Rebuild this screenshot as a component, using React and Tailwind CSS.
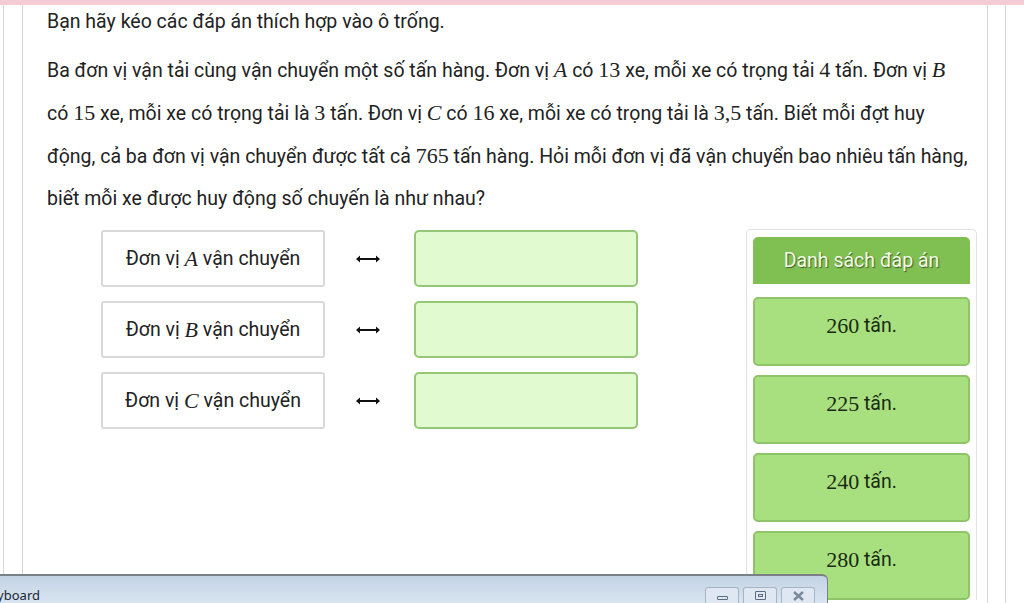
const M = ({ children, italic }) => (
  <span className={`font-['Liberation_Serif',serif] text-[22px] ${italic ? 'italic' : ''}`}>{children}</span>
);

const units = ['A', 'B', 'C'];
const answers = ['260', '225', '240', '280'];

export default function App() {
  return (
    <div className="relative w-[1024px] h-[603px] overflow-hidden bg-white font-['Roboto',sans-serif] text-[#222]">
      <div className="h-[5px] bg-[#f3cdd3]" />
      <div className="flex h-[598px]">
        <div className="w-[3px]" />
        <div className="w-[19px] border-l border-[#d6d6d6]" />
        <div className="w-[965px] border-l border-[#d6d6d6] pl-[24px]">
          <p className="pt-[4px] text-[19.5px] leading-[26px]">Bạn hãy kéo các đáp án thích hợp vào ô trống.</p>
          <div className="mt-[14px] whitespace-nowrap text-[19.5px] leading-[42px]">
            <div>Ba đơn vị vận tải cùng vận chuyển một số tấn hàng. Đơn vị <M italic>A</M> có <M>13</M> xe, mỗi xe có trọng tải <M>4</M> tấn. Đơn vị <M italic>B</M></div>
            <div>có <M>15</M> xe, mỗi xe có trọng tải là <M>3</M> tấn. Đơn vị <M italic>C</M> có <M>16</M> xe, mỗi xe có trọng tải là <M>3,5</M> tấn. Biết mỗi đợt huy</div>
            <div>động, cả ba đơn vị vận chuyển được tất cả <M>765</M> tấn hàng. Hỏi mỗi đơn vị đã vận chuyển bao nhiêu tấn hàng,</div>
            <div>biết mỗi xe được huy động số chuyến là như nhau?</div>
          </div>

          <div className="mt-[9px] flex">
            {/* matching rows */}
            <div className="ml-[54px] flex flex-col gap-[14px] pt-[1px]">
              {units.map(u => (
                <div key={u} className="flex items-center">
                  <div className="flex h-[57px] w-[224px] items-center justify-center rounded-[3px] border-2 border-[#d9d9d9] bg-white text-[19.5px]">
                    Đơn vị&nbsp;<M italic>{u}</M>&nbsp;vận chuyển
                  </div>
                  <div className="flex w-[89px] justify-center pr-[4px]">
                    <svg width="24" height="8" viewBox="0 0 24 8">
                      <path d="M3 4h18" stroke="#111" strokeWidth="2" />
                      <path d="M0 4l4-3.5v7z M24 4l-4-3.5v7z" fill="#111" />
                    </svg>
                  </div>
                  <div className="h-[57px] w-[224px] rounded-[5px] border-2 border-[#96c778] bg-[#e1fad0]" />
                </div>
              ))}
            </div>

            {/* answer list */}
            <div className="ml-[108px] w-[231px] rounded-t-[5px] border border-b-0 border-[#e2e2e2] bg-white px-[6px] pt-[7px]">
              <div className="flex h-[47px] items-center justify-center rounded-t-[5px] bg-[#80bf52] text-[19.5px] text-[#f2fbe6] [text-shadow:1px_1px_1px_#3d5f22]">
                Danh sách đáp án
              </div>
              <div className="mt-[13px] flex flex-col gap-[9px]">
                {answers.map(a => (
                  <div key={a} className="flex h-[69px] items-center justify-center rounded-[5px] border-2 border-[#8fc46a] bg-[#a9e07f] pb-[12px] text-[19.5px] text-[#1a2a12]">
                    <M>{a}</M>&nbsp;tấn.
                  </div>
                ))}
              </div>
            </div>
          </div>
        </div>
        <div className="w-[18px] border-l border-[#d6d6d6]" />
        <div className="flex-1 border-l border-[#d6d6d6]" />
      </div>

      {/* keyboard window bar */}
      <div className="absolute left-0 top-[574px] flex h-[29px] w-[828px] items-end justify-between rounded-tr-[6px] border-t-2 border-r border-[#7c7f85] bg-gradient-to-b from-[#c3d3e4] to-[#d9e5f1]">
        <span className="-ml-[18px] text-[13px] leading-[16px] text-[#1b2634] font-['Noto_Sans',sans-serif]">Keyboard</span>
        <div className="mr-[12px] flex gap-[4px] self-end">
          <div className="flex h-[16px] w-[34px] items-center justify-center rounded-t-[3px] border border-b-0 border-[#a7b4c3] bg-[#dfe8f2]">
            <div className="mt-[4px] h-[4px] w-[11px] rounded-[1px] border border-[#5b6b80]" />
          </div>
          <div className="flex h-[16px] w-[34px] items-center justify-center rounded-t-[3px] border border-b-0 border-[#a7b4c3] bg-[#dfe8f2]">
            <div className="flex h-[9px] w-[11px] items-center justify-center rounded-[1px] border border-[#5b6b80]">
              <div className="h-[3px] w-[5px] border border-[#5b6b80]" />
            </div>
          </div>
          <div className="flex h-[16px] w-[34px] items-center justify-center rounded-t-[3px] border border-b-0 border-[#a7b4c3] bg-[#dfe8f2]">
            <svg width="13" height="10" viewBox="0 0 13 10">
              <path d="M2 1l9 8M11 1l-9 8" stroke="#7a889a" strokeWidth="2.4" />
            </svg>
          </div>
        </div>
      </div>
    </div>
  );
}
